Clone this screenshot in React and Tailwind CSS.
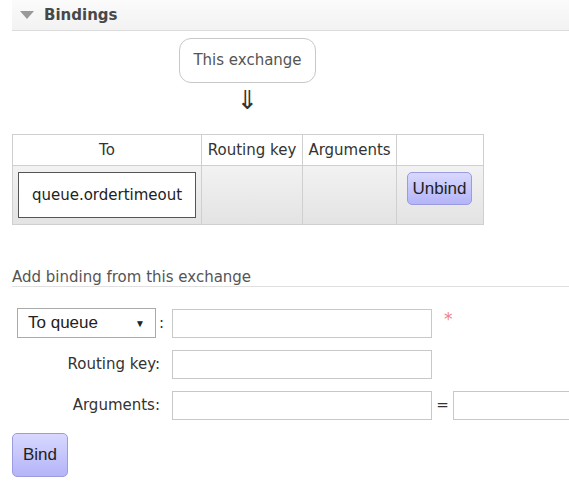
export default function App() {
  const font = { fontFamily: '"DejaVu Sans", Verdana, sans-serif' };
  const arial = { fontFamily: '"Liberation Sans", Arial, sans-serif' };

  return (
    <div className="w-[569px] h-[483px] bg-white text-[#484848] overflow-hidden" style={font}>
      {/* section header */}
      <div className="ml-[12px] h-[31px] bg-gradient-to-b from-[#fbfbfb] to-[#f2f2f2] border-b border-[#dcdcdc] flex items-center pl-[8px]">
        <svg width="14" height="10" viewBox="0 0 14 10" className="mr-[10px]">
          <path d="M0 1 L14 1 L7 9 Z" fill="#999" />
        </svg>
        <span className="text-[15px] font-bold text-[#484848]">Bindings</span>
      </div>

      {/* this exchange */}
      <div className="flex flex-col items-center w-[471px] ml-[12px] mt-[7px]">
        <div className="h-[45px] px-[13px] flex items-center rounded-[12px] border border-[#c8c8c8] text-[15px] text-[#555]">
          This exchange
        </div>
        <div className="text-[26px] leading-[30px] text-[#333] mt-[2px]">⇓</div>
      </div>

      {/* bindings table */}
      <table className="ml-[12px] mt-[19px] border-collapse text-[15px] text-[#333]">
        <thead>
          <tr className="h-[31px]">
            <th className="w-[189px] border border-[#cfcfcf] font-normal">To</th>
            <th className="w-[101px] border border-[#cfcfcf] font-normal">Routing key</th>
            <th className="w-[94px] border border-[#cfcfcf] font-normal">Arguments</th>
            <th className="w-[87px] border border-[#cfcfcf] font-normal"></th>
          </tr>
        </thead>
        <tbody>
          <tr className="h-[59px] bg-gradient-to-b from-[#f2f2f2] to-[#e3e3e3]">
            <td className="border border-[#cfcfcf] px-[5px]">
              <div className="h-[46px] bg-white border border-[#555] flex items-center justify-center text-[#222]">
                queue.ordertimeout
              </div>
            </td>
            <td className="border border-[#cfcfcf]"></td>
            <td className="border border-[#cfcfcf]"></td>
            <td className="border border-[#cfcfcf] align-top pt-[6px] px-[10px]">
              <button
                className="w-[65px] h-[33px] rounded-[5px] border border-[#9b9be0] bg-gradient-to-b from-[#d8d8ff] to-[#b4b4f8] text-[17px] text-[#222]"
                style={arial}
              >
                Unbind
              </button>
            </td>
          </tr>
        </tbody>
      </table>

      {/* add binding */}
      <div className="ml-[12px] mt-[43px] leading-[18px] border-b border-[#e0e0e0] text-[15px] text-[#555]">
        Add binding from this exchange
      </div>

      <div className="ml-[12px] mt-[21px] flex flex-col gap-[12px] text-[15px] text-[#333]">
        <div className="flex items-center">
          <div className="w-[160px] shrink-0 flex items-center pl-[5px]">
            <div
              className="w-[139px] h-[30px] border border-[#aaa] flex items-center justify-between pl-[10px] pr-[10px] text-[17px] text-[#222]"
              style={arial}
            >
              <span>To queue</span>
              <span className="text-[10px]">▼</span>
            </div>
            <span className="ml-[3px]">:</span>
          </div>
          <input className="w-[260px] h-[29px] shrink-0 border border-[#c8c8c8]" />
          <span className="ml-[12px] -mt-[6px] text-[#f08080] text-[17px]">*</span>
        </div>
        <div className="flex items-center">
          <div className="w-[160px] shrink-0 text-right pr-[12px]">Routing key:</div>
          <input className="w-[260px] h-[29px] shrink-0 border border-[#c8c8c8]" />
        </div>
        <div className="flex items-center">
          <div className="w-[160px] shrink-0 text-right pr-[12px]">Arguments:</div>
          <input className="w-[260px] h-[29px] shrink-0 border border-[#c8c8c8]" />
          <span className="w-[21px] shrink-0 text-center">=</span>
          <input className="w-[130px] h-[29px] shrink-0 border border-[#c8c8c8]" />
        </div>
      </div>

      <button
        className="ml-[12px] mt-[13px] w-[56px] h-[44px] rounded-[5px] border border-[#9b9be0] bg-gradient-to-b from-[#d8d8ff] to-[#b4b4f8] text-[17px] text-[#222]"
        style={arial}
      >
        Bind
      </button>
    </div>
  );
}
